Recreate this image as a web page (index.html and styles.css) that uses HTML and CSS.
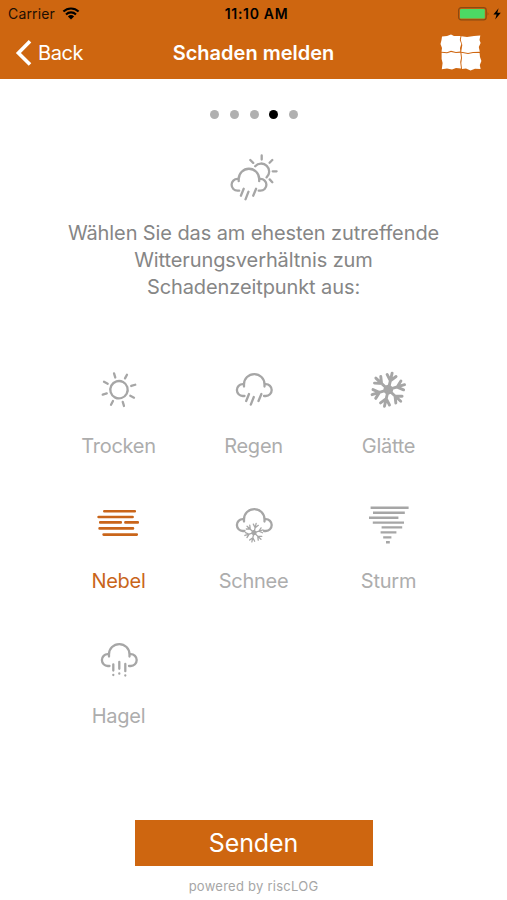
FILE: index.html
```html
<!DOCTYPE html>
<html lang="de">
<head>
    <meta charset="UTF-8">
    <meta name="viewport" content="width=device-width, initial-scale=1.0">
    <title>Schaden melden</title>
    <link rel="stylesheet" href="styles.css">
</head>
<body>
    <!-- shapes used more than once -->
    <svg class="defs" width="0" height="0">
        <symbol id="cloud" viewBox="0 0 48 48">
            <path d="M14 20.5V18.3a10.2 10.2 0 0 1 20.5 0V20.5M14.5 30H12.8a5.9 5.9 0 0 1 0-11.8H14M34.5 18.2H35.8a5.9 5.9 0 0 1 0 11.8H34"/>
        </symbol>
        <symbol id="rain" viewBox="0 0 48 48">
            <path d="M19 28l-2.8 7M23.8 31l-3 7.6M31.4 28l-2.9 7"/>
        </symbol>
        <g id="arm"><path d="M0 0V-17M-4.6-14.6L0-9.2L4.6-14.6"/></g>
        <g id="flake">
            <circle r="3.4" fill="currentColor"/>
            <use href="#arm" transform="rotate(-16)"/>
            <use href="#arm" transform="rotate(44)"/>
            <use href="#arm" transform="rotate(104)"/>
            <use href="#arm" transform="rotate(164)"/>
            <use href="#arm" transform="rotate(224)"/>
            <use href="#arm" transform="rotate(284)"/>
        </g>
    </svg>

    <header class="header">
        <div class="status">
            <div class="carrier">
                <span>Carrier</span>
                <svg class="wifi" width="18" height="13" viewBox="0 0 18 13">
                    <path d="M1.4 4.6a11 11 0 0 1 15.2 0M4 7.4a7.2 7.2 0 0 1 10 0"/>
                    <path class="solid" d="M9 12.6L5.9 9.4a4.5 4.5 0 0 1 6.2 0z"/>
                </svg>
            </div>
            <div class="time">11:10 AM</div>
            <div class="power">
                <svg width="44" height="14" viewBox="0 0 44 14">
                    <rect x=".6" y=".6" width="27.6" height="12.3" rx="2.6" fill="none" stroke="#8a4a12" stroke-width="1.2"/>
                    <rect x="2" y="2" width="24.8" height="9.6" rx="1.2" fill="#4cd964"/>
                    <path d="M29.6 4.8q1.6 2 0 4z" fill="#8a4a12"/>
                    <path d="M40.6 1.2L35.4 7.6H38.6L37.2 12.4L42.8 5.8H39.3z" fill="#000"/>
                </svg>
            </div>
        </div>
        <nav class="nav">
            <a class="back">
                <svg width="17" height="27" viewBox="0 0 17 27"><path d="M15 1.3L3.4 12.9L15 24.5"/></svg>
                <span>Back</span>
            </a>
            <h1 class="title">Schaden melden</h1>
            <svg class="logo" width="42" height="38" viewBox="0 0 42 38">
                <path d="M2 2.5L7 2L11 .5L14 2L20.5 2L19.8 6L21.3 10L20 14L20.3 17.6L16 18L11 16.8L7 18.2L1.5 17.8L2 14L.5 10L1.5 6z"/>
                <path d="M21.4 2.2L27 3L34 2L40.3 1.6L39.5 6L40.6 9L38.8 13L39.8 17.8L33 18L28 19L21.2 17.8L22.3 11L20.8 6z"/>
                <path d="M1.6 18.8L7 19.2L11 17.9L16 19L20.4 18.7L21 24L20.2 28L21 34.5L16 34L12 35.5L7 34.4L1.8 35.3L2.6 29L1.6 25z"/>
                <path d="M21.4 18.8L28 20L33 19L39.6 18.9L40 23L41.4 27L39.8 31L40.6 35L35 34.8L30.5 36.6L26 34.6L22 35L21.3 29L22 24z"/>
            </svg>
        </nav>
    </header>

    <main class="content">
        <div class="dots">
            <span class="dot"></span>
            <span class="dot"></span>
            <span class="dot"></span>
            <span class="dot active"></span>
            <span class="dot"></span>
        </div>

        <svg class="icon intro-icon" width="48" height="52" viewBox="0 0 48 52">
            <use href="#cloud" x="-5.3" y="10.7" width="48" height="48"/>
            <use href="#rain" x="-5.3" y="10.7" width="48" height="48"/>
            <path d="M25.2 16.2A8 8 0 1 1 36.6 27.4M31.7 5.4V9.6M20.3 10L23.2 12.9M42.3 10L39.6 12.7M42.7 21.3H46.6M39.7 29.4L42.3 32.2"/>
        </svg>
        <p class="question">Wählen Sie das am ehesten zutreffende<br>Witterungsverhältnis zum<br>Schadenzeitpunkt aus:</p>

        <div class="grid">
            <div class="option">
                <svg class="icon" width="48" height="48" viewBox="0 0 48 48">
                    <g transform="translate(24 23.7) rotate(-17)">
                        <circle r="8.7"/>
                        <path d="M12.8 0H17M-12.8 0H-17M0 12.8V17M0-12.8V-17M9.05 9.05L12 12M-9.05 9.05L-12 12M9.05-9.05L12-12M-9.05-9.05L-12-12"/>
                    </g>
                </svg>
                <span class="label">Trocken</span>
            </div>
            <div class="option">
                <svg class="icon" width="48" height="48" viewBox="0 0 48 48">
                    <use href="#cloud" width="48" height="48"/>
                    <use href="#rain" width="48" height="48"/>
                </svg>
                <span class="label">Regen</span>
            </div>
            <div class="option">
                <svg class="icon ice" width="48" height="48" viewBox="0 0 48 48">
                    <use href="#flake" transform="translate(23.3 23.7) rotate(29)"/>
                </svg>
                <span class="label">Glätte</span>
            </div>
            <div class="option selected">
                <svg class="icon fog" width="48" height="48" viewBox="0 0 48 48">
                    <path d="M9.3 10.3H39.8M3.6 16H37.6M5.2 21.4H25.8M30.4 21.4H42.8M4.6 27.4H38M8.6 33.6H41.8"/>
                </svg>
                <span class="label">Nebel</span>
            </div>
            <div class="option">
                <svg class="icon" width="48" height="48" viewBox="0 0 48 48">
                    <use href="#cloud" width="48" height="48"/>
                    <use href="#flake" transform="translate(24 31.7) rotate(29) scale(.56)"/>
                </svg>
                <span class="label">Schnee</span>
            </div>
            <div class="option">
                <svg class="icon storm" width="48" height="48" viewBox="0 0 48 48">
                    <path d="M5.6 6.7H43.6M8 11.7H39.8M4 16.7H33.4M7.8 21.6H39M16.6 26.4H37.2M15.6 31.4H31.4M18.2 36.4H26.4M21 41.2H24.8"/>
                </svg>
                <span class="label">Sturm</span>
            </div>
            <div class="option">
                <svg class="icon" width="48" height="48" viewBox="0 0 48 48">
                    <use href="#cloud" width="48" height="48"/>
                    <path d="M18.3 28.3V34.6M24.3 26V32.8M30.3 28V35.2M18.3 38.8V39M24.3 37.5V37.7M30.3 39.4V39.6"/>
                </svg>
                <span class="label">Hagel</span>
            </div>
        </div>
    </main>

    <footer class="footer">
        <button class="send">Senden</button>
        <div class="powered">powered by riscLOG</div>
    </footer>
</body>
</html>
```
FILE: styles.css
```css
* {
    box-sizing: border-box;
}

body {
    margin: 0;
    height: 900px;
    display: flex;
    flex-direction: column;
    background: #fff;
    font-family: Inter, "Liberation Sans", sans-serif;
    overflow: hidden;
}

.defs {
    position: absolute;
}

/* header */
.header {
    height: 79px;
    background: #ce6610;
}

.status {
    height: 27px;
    padding: 0 5px 0 8px;
    display: grid;
    grid-template-columns: 1fr auto 1fr;
    align-items: center;
    font-size: 14px;
    color: #1d0f03;
}

.carrier {
    display: flex;
    align-items: center;
    gap: 7px;
    letter-spacing: 0.15px;
}

.wifi {
    fill: none;
    stroke: #000;
    stroke-width: 2.1;
}

.wifi .solid {
    fill: #000;
    stroke: none;
}

.time {
    margin-left: 3px;
    font-weight: 600;
    letter-spacing: 0.7px;
    color: #000;
}

.power {
    display: flex;
    justify-content: flex-end;
}

.nav {
    height: 52px;
    padding: 0 25px 0 15px;
    display: grid;
    grid-template-columns: 1fr auto 1fr;
    align-items: center;
    color: #fff;
}

.back {
    display: flex;
    align-items: center;
    gap: 6px;
    font-size: 20px;
    letter-spacing: -0.4px;
}

.back svg {
    fill: none;
    stroke: #fff;
    stroke-width: 3.6;
}

.title {
    margin: 0 0 0 10px;
    font-size: 20px;
    font-weight: 600;
}

.logo {
    justify-self: end;
    fill: #fff;
}

/* content */
.content {
    flex: 1;
    display: flex;
    flex-direction: column;
    align-items: center;
    padding-top: 30.5px;
}

.dots {
    display: flex;
    gap: 10.6px;
    margin-left: 1px;
}

.dot {
    width: 9px;
    height: 9px;
    border-radius: 50%;
    background: #b0b0b0;
}

.dot.active {
    background: #000;
}

.icon {
    display: block;
    fill: none;
    stroke: currentColor;
    stroke-width: 2.3;
    stroke-linecap: round;
    color: #a6a6a6;
}

.intro-icon {
    margin-top: 31.5px;
}

.question {
    margin: 18px 0 0;
    font-size: 20px;
    line-height: 27px;
    letter-spacing: -0.1px;
    text-align: center;
    color: #868686;
}

/* weather options */
.grid {
    margin-top: 65px;
    display: grid;
    grid-template-columns: repeat(3, 135px);
    grid-auto-rows: 135px;
}

.option {
    display: flex;
    flex-direction: column;
    align-items: center;
}

.label {
    margin-top: 19px;
    font-size: 20px;
    line-height: 27px;
    letter-spacing: -0.25px;
    color: #adadad;
}

.ice {
    stroke-width: 2.9;
}

.fog {
    stroke-width: 2.6;
}

.storm {
    stroke-width: 2.4;
    stroke-linecap: butt;
}

.selected .icon,
.selected .label {
    color: #c9651a;
}

/* footer */
.footer {
    display: flex;
    flex-direction: column;
    align-items: center;
    height: 80px;
}

.send {
    width: 238px;
    height: 46px;
    padding: 0;
    border: none;
    background: #ce6610;
    color: #fff;
    font-family: inherit;
    font-size: 25px;
    letter-spacing: -0.1px;
}

.powered {
    margin-top: 12px;
    font-size: 13px;
    line-height: 16px;
    letter-spacing: 0.25px;
    color: #a6a6a6;
}
```
